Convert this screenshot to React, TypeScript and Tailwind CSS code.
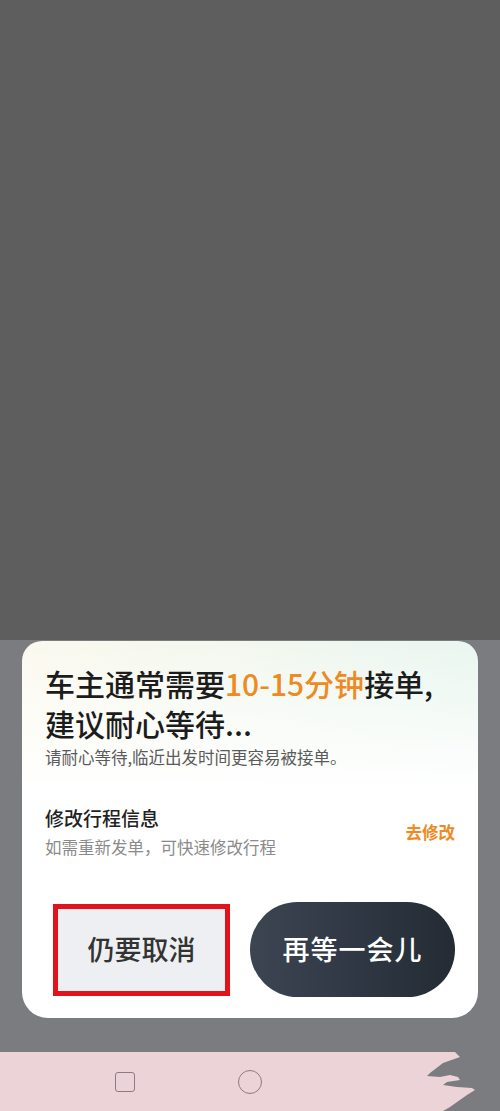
import React from 'react';

const TornEdge = () => (
  <svg className="absolute right-0 top-0" width="100" height="59" viewBox="0 0 100 59">
    <polygon
      fill="#7a7c7f"
      points="55,0 100,0 100,59 43,59 50,55 57,50 67,43 75,38 72,36 57,35 43,33 47,30 60,28 58,25 50,23 40,25 27,24 30,21 43,11 60,5"
    />
  </svg>
);

const App = () => {
  return (
    <div className="flex h-[1111px] w-[500px] flex-col font-['Noto_Sans_CJK_SC','Noto_Sans',sans-serif]">
      {/* dimmed page behind the sheet */}
      <div className="h-[640px] bg-[#5e5e5e]" />

      <div className="flex flex-1 flex-col bg-[#7a7c7f] px-[22px] pt-[1px]">
        <div className="rounded-t-[20px] rounded-b-[26px] bg-white bg-[linear-gradient(180deg,rgba(255,255,255,0)_0px,#ffffff_150px),linear-gradient(90deg,#fbf9ee,#e9f6ef)] px-[23px] pb-[21px] pt-[22px]">
          <h2 className="text-[30px] font-medium leading-[40px] text-[#1c1c1c]">
            车主通常需要<span className="text-[#ef8a23]">10-15分钟</span>接单,
            <br />
            建议耐心等待...
          </h2>
          <p className="mt-[2px] text-[16.5px] leading-[24px] text-[#5a5a5a]">
            请耐心等待,临近出发时间更容易被接单。
          </p>

          <div className="mt-[36px] flex items-center justify-between">
            <div>
              <p className="text-[19px] font-medium leading-[26px] text-[#222]">修改行程信息</p>
              <p className="mt-[4px] text-[16.5px] leading-[24px] text-[#8a8a8a]">如需重新发单，可快速修改行程</p>
            </div>
            <button className="text-[16.5px] font-semibold text-[#ef8a23]">去修改</button>
          </div>

          <div className="mt-[43px] flex items-center gap-[20px] pl-[8px]">
            <button className="h-[92px] w-[177px] border-[5px] border-[#e1141d] bg-[#eeeff2] text-[27px] font-medium text-[#333]">
              仍要取消
            </button>
            <button className="h-[95px] flex-1 rounded-full bg-[linear-gradient(90deg,#3c4551,#2f3844_50%,#242b34)] text-[27px] font-medium tracking-[1px] text-white">
              再等一会儿
            </button>
          </div>
        </div>
      </div>

      {/* system nav bar */}
      <div className="relative flex h-[59px] items-center gap-[103px] bg-[#ecd3d8] pl-[115px]">
        <div className="h-[20px] w-[20px] rounded-[3px] border-[1.5px] border-[#8c7b80]" />
        <div className="h-[24px] w-[24px] rounded-full border-[1.5px] border-[#8c7b80]" />
        <TornEdge />
      </div>
    </div>
  );
};

export default App;
